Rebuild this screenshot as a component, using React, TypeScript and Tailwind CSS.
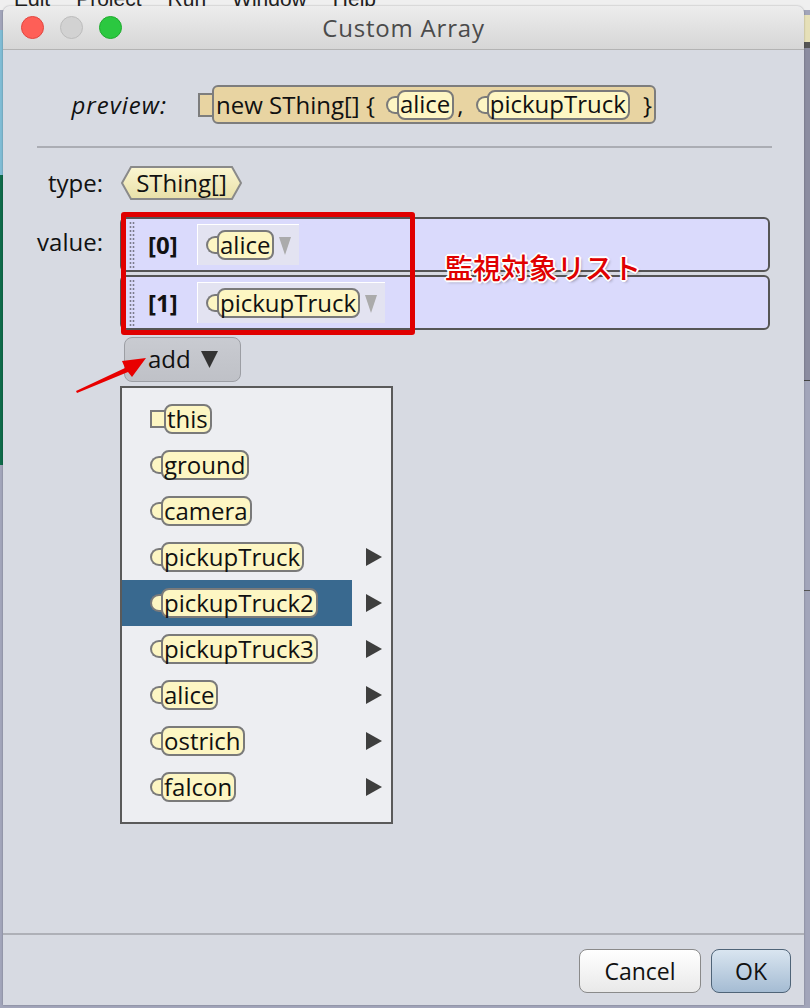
import React from "react";

function Pill({ label, square = false }: { label: string; square?: boolean }) {
  return (
    <div className="flex items-center shrink-0">
      {square ? (
        <div className="relative w-[16px] h-[18px] -mr-[2px] shrink-0 border-2 border-[#7a7a7a] bg-[#fdf6c3]" />
      ) : (
        <div className="relative w-[13px] h-[18px] -mr-[2px] shrink-0 rounded-l-full border-2 border-r-0 border-[#7a7a7a] bg-[#fdf6c3]" />
      )}
      <div className="relative h-[30px] flex items-center rounded-[8px] border-2 border-[#7a7a7a] bg-[#fdf6c3] pl-[1px] pr-[2px] text-[24px] leading-none text-[#111]">
        <span className="-mt-[1px]">{label}</span>
      </div>
    </div>
  );
}

function RightArrow() {
  return (
    <svg width="16" height="18" viewBox="0 0 16 18">
      <polygon points="0,0 16,9 0,18" fill="#3e3e3e" />
    </svg>
  );
}

function GrayDown() {
  return (
    <svg width="12" height="20" viewBox="0 0 12 20">
      <polygon points="0,2 12,2 6,20" fill="#ababab" />
    </svg>
  );
}

const menuItems = [
  { label: "this", square: true, arrow: false },
  { label: "ground", arrow: false },
  { label: "camera", arrow: false },
  { label: "pickupTruck", arrow: true },
  { label: "pickupTruck2", arrow: true, active: true },
  { label: "pickupTruck3", arrow: true },
  { label: "alice", arrow: true },
  { label: "ostrich", arrow: true },
  { label: "falcon", arrow: true },
];

function ValueRow({ index, label }: { index: number; label: string }) {
  return (
    <div className="h-[55px] flex items-center rounded-[6px] border-2 border-[#555] bg-[#dadafc]">
      <div className="self-stretch my-[2px] ml-[7px] w-[6px] bg-[radial-gradient(circle,#7c7c8c_0.9px,transparent_1.2px)] bg-[length:3px_4px]" />
      <div className="ml-[13px] w-[49px] text-[24px] font-bold leading-none text-[#111]">[{index}]</div>
      <div className="h-[41px] flex items-center pl-[8px] pr-[8px] bg-[#e3e3f1] border-t border-l border-white">
        <Pill label={label} />
        <div className="ml-[5px]">
          <GrayDown />
        </div>
      </div>
    </div>
  );
}

export default function App() {
  return (
    <div className="relative w-[810px] h-[1008px] overflow-hidden bg-[#a2a5ba] font-['Open_Sans',sans-serif]">
      {/* desktop behind */}
      <div className="absolute left-0 top-0 w-[810px] h-[10px] bg-[#efefef]" />
      <div className="absolute left-0 top-0 w-[810px] h-[7px] overflow-hidden">
        <div className="mt-[-13px] ml-[14px] flex gap-[26px] text-[21px] leading-[24px] text-[#222] font-['Liberation_Sans',sans-serif]">
          <span>Edit</span>
          <span>Project</span>
          <span>Run</span>
          <span>Window</span>
          <span>Help</span>
        </div>
      </div>
      <div className="absolute left-0 top-[30px] w-[3px] h-[145px] bg-[#80bcd5]" />
      <div className="absolute left-0 top-[175px] w-[3px] h-[290px] bg-[#0f6b4a]" />
      <div className="absolute right-0 top-[15px] w-[6px] h-[27px] bg-[#e6e0b8]" />
      <div className="absolute right-0 top-[42px] w-[6px] h-[6px] bg-[#555]" />
      <div className="absolute right-0 top-[48px] w-[6px] h-[332px] bg-[#8b8ca0]" />
      <div className="absolute right-0 top-[380px] w-[6px] h-[1px] bg-[#444]" />
      <div className="absolute right-0 top-[590px] w-[6px] h-[1px] bg-[#555]" />

      {/* window */}
      <div className="absolute left-[3px] top-[6px] w-[801px] h-[999px] rounded-t-[7px] overflow-hidden flex flex-col bg-[#d7dae2] shadow-[0_0_2px_rgba(0,0,0,0.35)]">
        {/* title bar */}
        <div className="h-[44px] shrink-0 flex items-center bg-linear-to-b from-[#ededed] to-[#d6d6d6] border-b border-[#b3b3b3]">
          <div className="w-[150px] flex items-center gap-[16px] pl-[18px]">
            <div className="w-[23px] h-[23px] rounded-full bg-[#fe5f57] border border-[#e2463f]" />
            <div className="w-[23px] h-[23px] rounded-full bg-[#d2d2d2] border border-[#bcbcbc]" />
            <div className="w-[23px] h-[23px] rounded-full bg-[#2bc840] border border-[#1fab2e]" />
          </div>
          <div className="flex-1 text-center text-[24px] tracking-[0.8px] text-[#4b4b4b]">Custom Array</div>
          <div className="w-[150px]" />
        </div>

        {/* content */}
        <div className="flex-1 flex flex-col">
          {/* preview */}
          <div className="mt-[35px] h-[39px] flex items-center">
            <div className="ml-[57px] w-[107px] text-right italic text-[24px] tracking-[1px] text-[#111] leading-none">preview:</div>
            <div className="ml-[31px] flex items-center">
              <div className="relative w-[16px] h-[24px] -mr-[2px] border-2 border-[#7d7d7d] bg-[#e8d4a2]" />
              <div className="relative h-[39px] flex items-center rounded-[6px] border-2 border-[#7d7d7d] bg-[#e8d4a2] pl-[2px] pr-[2px] text-[24px] leading-none text-[#111]">
                <span className="whitespace-pre">new SThing[] {"{"}</span>
                <div className="ml-[11px]">
                  <Pill label="alice" />
                </div>
                <span className="ml-[3px] whitespace-pre">, </span>
                <div className="ml-[6px]">
                  <Pill label="pickupTruck" />
                </div>
                <span className="ml-[13px]">{"}"}</span>
              </div>
            </div>
          </div>

          {/* separator */}
          <div className="mt-[22px] ml-[34px] mr-[32px] h-[2px] bg-[#abadb4]" />

          {/* type */}
          <div className="mt-[18px] flex items-center h-[34px]">
            <div className="w-[100px] text-right text-[24px] leading-none text-[#111]">type:</div>
            <div className="ml-[18px] relative w-[121px] h-[34px] flex items-center justify-center">
              <svg className="absolute inset-0" width="121" height="34" viewBox="0 0 121 34">
                <defs>
                  <linearGradient id="tg" x1="0" y1="0" x2="0" y2="1">
                    <stop offset="0" stopColor="#fbf6d2" />
                    <stop offset="1" stopColor="#e9e0a8" />
                  </linearGradient>
                </defs>
                <polygon points="1,17 10,1 111,1 120,17 111,33 10,33" fill="url(#tg)" stroke="#8a8a8a" strokeWidth="2" />
              </svg>
              <span className="relative text-[24px] leading-none text-[#111] -mt-[1px]">SThing[]</span>
            </div>
          </div>

          {/* value */}
          <div className="mt-[17px] flex items-start">
            <div className="w-[100px] pt-[13px] text-right text-[24px] leading-none text-[#111]">value:</div>
            <div className="ml-[17px] w-[650px] flex flex-col">
              <ValueRow index={0} label="alice" />
              <div className="mt-[3px]">
                <ValueRow index={1} label="pickupTruck" />
              </div>
              <div className="mt-[7px] ml-[4px] w-[117px] h-[45px] flex items-center pl-[23px] rounded-[8px] border border-[#9c9ea4] bg-linear-to-b from-[#c9cbd1] to-[#bfc1c7] text-[24px] leading-none text-[#111]">
                <span className="-mt-[2px]">add</span>
                <svg className="ml-[10px]" width="17" height="17" viewBox="0 0 17 17">
                  <polygon points="0,0 17,0 8.5,17" fill="#333" />
                </svg>
              </div>
            </div>
          </div>
        </div>

        {/* footer */}
        <div className="shrink-0 border-t-2 border-[#aeb0b7] flex justify-end gap-[10px] pt-[14px] pb-[12px] pr-[13px]">
          <div className="w-[122px] h-[44px] flex items-center justify-center rounded-[8px] border border-[#8a8a8a] bg-linear-to-b from-[#ffffff] to-[#e9e9e9] text-[23px] text-[#111]">
            Cancel
          </div>
          <div className="w-[80px] h-[44px] flex items-center justify-center rounded-[8px] border border-[#4f6478] bg-linear-to-b from-[#d9e5f0] to-[#a5bcd3] text-[23px] text-[#111]">
            OK
          </div>
        </div>
      </div>

      {/* annotation: red rectangle */}
      <div className="absolute left-[121px] top-[212px] w-[294px] h-[123px] rounded-[3px] border-[5px] border-[#e00000]" />
      {/* annotation: label */}
      <div className="absolute left-[445px] top-[253px] text-[28px] leading-none font-medium text-[#e00000] font-['Noto_Sans_CJK_JP',sans-serif] [text-shadow:-2px_0_0_#fff,2px_0_0_#fff,0_-2px_0_#fff,0_2px_0_#fff,-1px_-1px_0_#fff,1px_1px_0_#fff,-1px_1px_0_#fff,1px_-1px_0_#fff,2px_2px_3px_rgba(0,0,0,0.35)]">
        監視対象リスト
      </div>
      {/* annotation: arrow */}
      <svg className="absolute left-[70px] top-[350px]" width="85" height="50" viewBox="0 0 85 50">
        <polygon points="6,41 55,18 52,11 76,8 62,27 58,22 7,43" fill="#e80000" />
      </svg>

      {/* dropdown menu */}
      <div className="absolute left-[120px] top-[386px] w-[273px] h-[438px] border-2 border-[#5a5a5a] bg-[#edeef2] pt-[8px] flex flex-col">
        {menuItems.map((m) => (
          <div key={m.label} className="h-[46px] flex items-center">
            <div className={"w-[230px] h-[46px] flex items-center pl-[28px] " + (m.active ? "bg-[#39698f]" : "")}>
              <Pill label={m.label} square={m.square} />
            </div>
            {m.arrow && (
              <div className="ml-[14px] flex items-center">
                <RightArrow />
              </div>
            )}
          </div>
        ))}
      </div>
    </div>
  );
}
